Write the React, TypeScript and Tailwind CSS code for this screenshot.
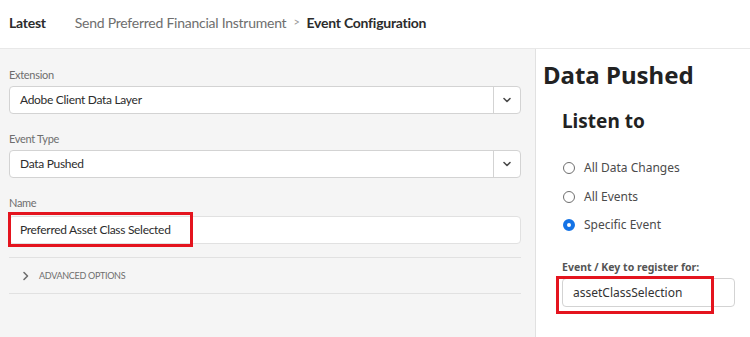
import React from "react";

const Chevron = () => (
  <svg width="10" height="10" viewBox="0 0 10 10" fill="none">
    <path d="M2 3.5 L5 6.5 L8 3.5" stroke="#4b4b4b" strokeWidth="1.6" strokeLinecap="round" strokeLinejoin="round" />
  </svg>
);

const Select = ({ value }: { value: string }) => (
  <div className="flex h-[28px] w-[512px] items-stretch rounded-[4px] border border-[#d3d3d3] bg-white">
    <div className="flex flex-1 items-center pl-[10px] text-[12px] tracking-[-0.3px] text-[#2c2c2c]">{value}</div>
    <div className="flex w-[27px] items-center justify-center border-l border-[#d3d3d3]">
      <Chevron />
    </div>
  </div>
);

const Label = ({ children, className }: { children: React.ReactNode; className: string }) => (
  <div className={"text-[11px] leading-[14px] tracking-[-0.3px] text-[#6e6e6e] " + className}>{children}</div>
);

const Radio = ({ label, checked }: { label: string; checked?: boolean }) => (
  <div className="flex h-[28.5px] items-center gap-[9px]">
    {checked ? (
      <span className="box-border h-[12px] w-[12px] rounded-full border-[4px] border-[#1473e6] bg-white" />
    ) : (
      <span className="box-border h-[12px] w-[12px] rounded-full border-[1.5px] border-[#6e6e6e] bg-white" />
    )}
    <span className="text-[12px] text-[#4b4b4b]">{label}</span>
  </div>
);

export default function App() {
  return (
    <div className="flex h-[337px] w-[750px] flex-col overflow-hidden bg-white" style={{ fontFamily: "Lato, 'Noto Sans', sans-serif" }}>
      <div className="flex h-[49px] shrink-0 items-center border-b border-[#e8e8e8] bg-white pb-[4px] pl-[9px] text-[14px] tracking-[-0.25px]">
        <span className="font-bold text-[#2c2c2c]">Latest</span>
        <span className="ml-[29px] text-[#6e6e6e]">Send Preferred Financial Instrument</span>
        <span className="mx-[7px] text-[11px] text-[#9a9a9a]">&gt;</span>
        <span className="font-bold text-[#2c2c2c]">Event Configuration</span>
      </div>
      <div className="flex flex-1">
        <div className="w-[536px] shrink-0 border-r border-[#e1e1e1] bg-[#f5f5f5] pl-[9px] pt-[19px]">
          <Label className="mb-[4px]">Extension</Label>
          <Select value="Adobe Client Data Layer" />
          <Label className="mb-[4px] mt-[18px]">Event Type</Label>
          <Select value="Data Pushed" />
          <Label className="mb-[6px] mt-[18px]">Name</Label>
          <div className="relative h-[28px] w-[512px] rounded-[4px] border border-[#e1e1e1] bg-white">
            <div className="flex h-full items-center pl-[10px] text-[12px] tracking-[-0.3px] text-[#2c2c2c]">Preferred Asset Class Selected</div>
            <div className="absolute left-[-2px] top-[-5px] h-[35px] w-[185px] border-[3px] border-[#e4141e]" />
          </div>
          <div className="mr-[14px] mt-[13px] border-t border-[#e1e1e1]" />
          <div className="flex h-[35px] items-center pl-[13px] text-[9px] text-[#6e6e6e]">
            <svg width="8" height="10" viewBox="0 0 8 10" fill="none" className="mr-[9px]">
              <path d="M2 1.5 L5.5 5 L2 8.5" stroke="#6e6e6e" strokeWidth="1.6" strokeLinecap="round" strokeLinejoin="round" />
            </svg>
            <span className="tracking-[-0.3px]">ADVANCED OPTIONS</span>
          </div>
          <div className="mr-[14px] border-t border-[#e1e1e1]" />
        </div>
        <div className="flex-1 bg-white pl-[7px] pt-[10px]" style={{ fontFamily: "'Noto Sans', 'Open Sans', sans-serif" }}>
          <div className="text-[24px] font-bold leading-[32px] text-[#222]">Data Pushed</div>
          <div className="pl-[19px]">
            <div className="mt-[16px] text-[19px] font-bold leading-[28px] text-[#222]">Listen to</div>
            <div className="mt-[19px] pl-[1px]">
              <Radio label="All Data Changes" />
              <Radio label="All Events" />
              <Radio label="Specific Event" checked />
            </div>
            <div className="mt-[20px] text-[10.5px] font-bold text-[#555]">Event / Key to register for:</div>
            <div className="relative mt-[3px] h-[29px] w-[173px] rounded-[4px] border border-[#d3d3d3] bg-white">
              <div className="flex h-full items-center pl-[10px] text-[12px] text-[#333]">assetClassSelection</div>
              <div className="absolute left-[-7px] top-[-3px] h-[38px] w-[158px] border-[3px] border-[#e4141e]" />
            </div>
          </div>
        </div>
      </div>
    </div>
  );
}
